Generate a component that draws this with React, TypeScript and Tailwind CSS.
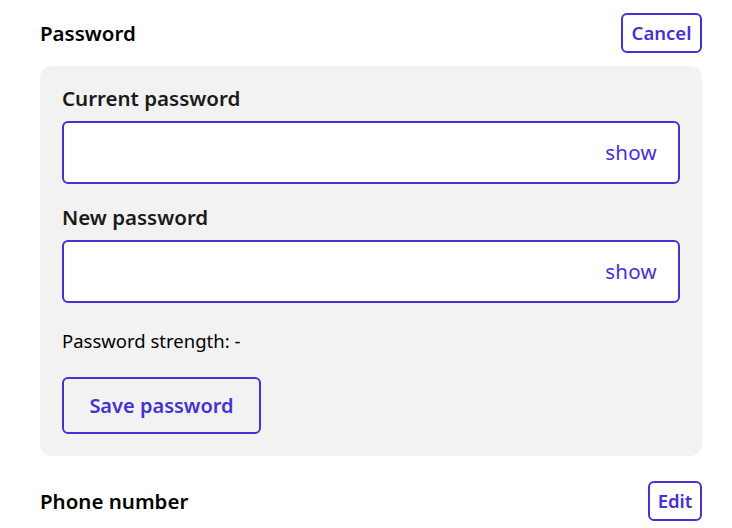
import React, { useState } from "react";

const font = { fontFamily: "'Noto Sans', Lato, sans-serif" };

const PasswordField: React.FC<{ label: string }> = ({ label }) => {
  const [visible, setVisible] = useState(false);
  return (
    <div>
      <label className="block text-[20.5px] font-semibold text-[#1a1a1a] leading-[20px] mb-[13px]">
        {label}
      </label>
      <div className="flex items-center h-[63px] bg-white border-2 border-[#4332d6] rounded-[6px] pl-5 pr-[21px]">
        <input
          type={visible ? "text" : "password"}
          className="flex-1 h-full outline-none bg-transparent text-[18px]"
        />
        <button
          onClick={() => setVisible(!visible)}
          className="text-[20.5px] text-[#4332d6] leading-none tracking-[0.3px]"
        >
          {visible ? "hide" : "show"}
        </button>
      </div>
    </div>
  );
};

export default function App() {
  return (
    <div className="min-h-screen bg-white pl-10 pr-[30px] pt-[13px]" style={font}>
      <div className="flex justify-between items-center">
        <h2 className="text-[20.5px] font-semibold text-black">Password</h2>
        <button className="h-10 w-[81px] border-2 border-[#4332d6] rounded-[6px] text-[18.5px] font-semibold text-[#4332d6]">
          Cancel
        </button>
      </div>

      <div className="mt-[13px] bg-[#f2f2f2] rounded-xl px-[22px] pt-[22px] pb-[22px]">
        <PasswordField label="Current password" />
        <div className="mt-[23px]">
          <PasswordField label="New password" />
        </div>
        <p className="mt-[28px] text-[18.5px] text-black leading-[19px]">
          Password strength: -
        </p>
        <button className="mt-[27px] h-[57px] w-[199px] border-2 border-[#4332d6] rounded-[6px] text-[20px] font-semibold text-[#4332d6]">
          Save password
        </button>
      </div>

      <div className="flex justify-between items-center mt-[25px]">
        <h2 className="text-[20.5px] font-semibold text-black">Phone number</h2>
        <button className="h-10 w-[54px] border-2 border-[#4332d6] rounded-[6px] text-[18.5px] font-semibold text-[#4332d6]">
          Edit
        </button>
      </div>
    </div>
  );
}
